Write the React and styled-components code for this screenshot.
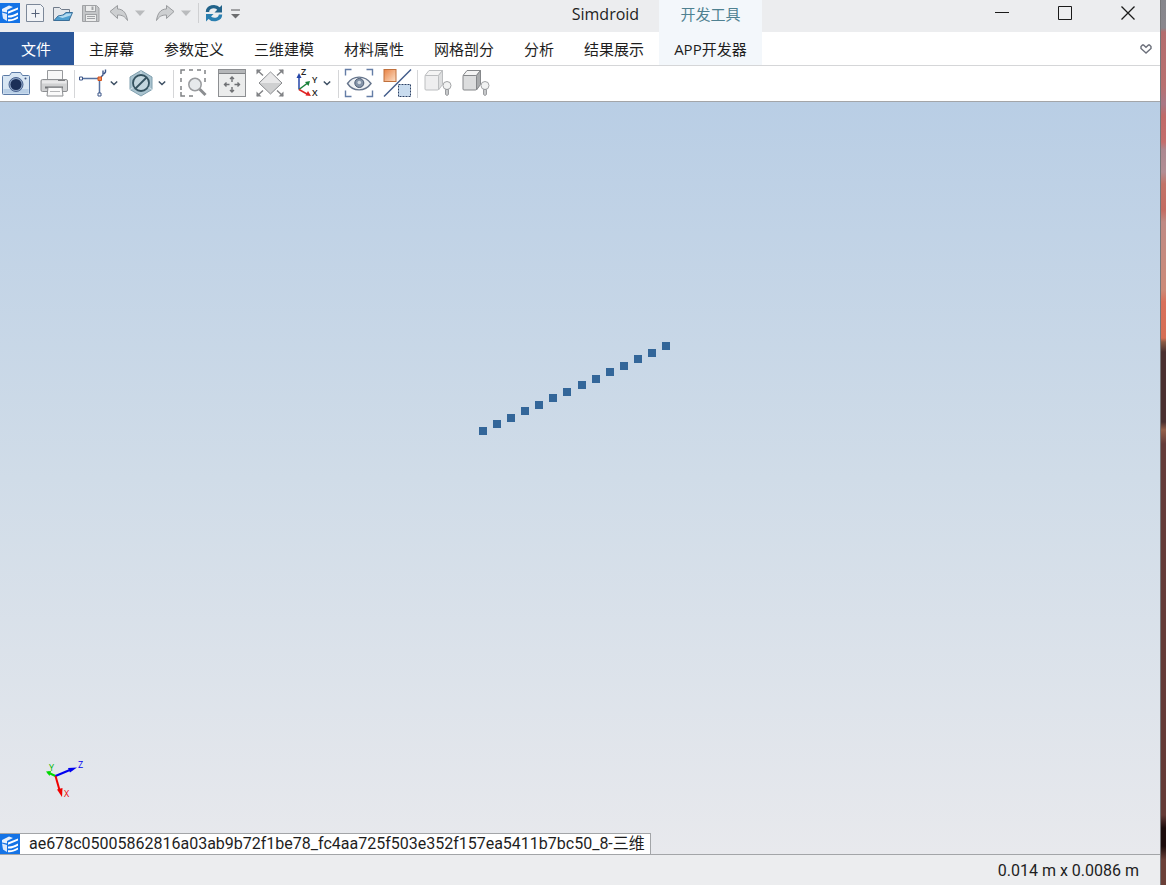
import React from "react";
import styled, { createGlobalStyle } from "styled-components";

const GlobalStyle = createGlobalStyle`
  * {
    box-sizing: border-box;
  }

  body {
    margin: 0;
    background: linear-gradient(
      #86868c 0,
      #8a878d 28px,
      #b36d6e 32px,
      #b87070 86px,
      #a87886 104px,
      #c06a68 116px,
      #c46e6c 142px,
      #ac8890 150px,
      #b28e94 172px,
      #c27468 184px,
      #c46c62 210px,
      #bf8a84 222px,
      #cc8a78 290px,
      #d8705a 302px,
      #d66e54 338px,
      #8a5a44 342px,
      #4a3030 352px,
      #4a3030 422px,
      #94604a 430px,
      #643c3a 444px,
      #643a36 815px,
      #1c0c0c 828px,
      #1c0c0c 846px,
      #6b4038 860px
    );
  }

  body,
  button {
    font-family: "Open Sans", "Noto Sans CJK SC", sans-serif;
    font-size: 15px;
    color: #1e1e1e;
  }

  button {
    display: flex;
    align-items: center;
    margin: 0;
    padding: 0;
    border: 0;
    background: none;
    cursor: pointer;
  }

  svg {
    display: block;
    flex: none;
    overflow: visible;
  }
`;

const Window = styled.div`
  display: flex;
  flex-direction: column;
  min-height: 100vh;
  margin-right: 5px;
  border-right: 1px solid #77777a;
  background: #ecedef;
`;

const Header = styled.header`
  display: grid;
  grid-template-columns: auto auto 1fr;
  grid-template-rows: 32px 33px;
  background: linear-gradient(#ecedef 32px, #fff 32px);
`;

const TitleArea = styled.div`
  display: flex;
  align-items: flex-start;
  padding: 3px 20px 0 0;
`;

const Title = styled.h1`
  margin: 0 0 0 auto;
  font-size: 16px;
  line-height: 22px;
  font-weight: 400;
`;

const QuickTools = styled.div`
  display: flex;
  gap: ${(props) => props.$gap || 8}px;
`;

const QuickExtra = styled(QuickTools)`
  margin-left: 5px;
  padding-left: 5px;
  border-left: 1px solid #cfd0d2;
`;

const AppLogo = styled.span`
  margin-right: 5px;
`;

const QuickSplit = styled.div`
  display: flex;
  gap: 6px;
  padding-right: 2px;
`;

const Tabs = styled.nav`
  grid-row: 2;
  display: flex;
`;

const Tab = styled.button`
  padding: 0 15px;
  white-space: nowrap;
  line-height: 32px;
`;

const FileTab = styled(Tab)`
  padding: 0 23px 0 21px;
  background: #2b579a;
  color: #fff;
`;

const ContextTitle = styled.div`
  background: #f3f7fb;
  color: #4f8191;
  text-align: center;
  line-height: 28px;
`;

const ContextTab = styled(Tab)`
  grid-row: 2;
  grid-column: 2;
  background: #f3f7fb;
`;

const WindowControls = styled.div`
  display: flex;
  justify-content: flex-end;
  padding-right: 1px;
`;

const ControlButton = styled.button`
  justify-content: center;
  width: 63px;
  height: 26px;
`;

const CollapseButton = styled.button`
  grid-row: 2;
  grid-column: 3;
  justify-self: end;
  padding-right: 8px;
`;

const Toolbar = styled.div`
  display: flex;
  padding: 4px 0 3px;
  background: #fff;
  border-top: 1px solid #d5d6d8;
  border-bottom: 1px solid #a3a5a8;
`;

const ToolGroup = styled.div`
  display: flex;
  gap: 10px;
  padding: 0 6px;

  &:first-child {
    padding-left: 2px;
  }

  & + & {
    border-left: 1px solid #d5d6d8;
  }
`;

const Split = styled.div`
  display: flex;
`;

const CaretButton = styled.button`
  width: 10px;
  justify-content: center;
`;

const Viewport = styled.main`
  position: relative;
  display: flex;
  flex: 1;
  flex-direction: column;
  justify-content: flex-end;
  align-items: flex-start;
  background: linear-gradient(#b9cee5, #d0dce8 50%, #e8e9ed);
`;

const PointCloud = styled.svg`
  position: absolute;
  left: 479px;
  top: 240px;
`;

const Triad = styled.svg`
  position: absolute;
  left: 40px;
  bottom: 52px;
`;

const DocTab = styled.button`
  gap: 9px;
  padding-right: 5px;
  background: #fff;
  border-top: 1px solid #a3a5a8;
  border-right: 1px solid #a3a5a8;
  font-family: Roboto, "Noto Sans CJK SC", sans-serif;
  font-size: 16px;
  line-height: 20px;
`;

const StatusBar = styled.footer`
  padding: 0 21px 0 0;
  border-top: 1px solid #a3a5a8;
  text-align: right;
  font-family: Roboto, "Noto Sans CJK SC", sans-serif;
  font-size: 16px;
  line-height: 32px;
  height: 31px;
`;

const Logo = () => (
  <svg width="20" height="20" viewBox="0 0 20 20">
    <rect width="20" height="20" fill="#1473e6" />
    <path d="M2 6 9 2.500l4 1.500-6 3v2.500L2 8.500z" fill="#fff" opacity=".9" />
    <path d="M2 9.500l5 1.500v7L3 15.500z" fill="#dbe9fc" />
    <path d="M8 8.500 18 4.500v2L8 10.700z" fill="#fff" />
    <path d="M8 12.500c3 .3 6-1 10-3v2.200c-4 2-7 3.300-10 2.800z" fill="#fff" />
    <path d="M8 16.200c3 .4 6-.6 10-2.800v2.200c-4 2.200-7 3-10 2.600z" fill="#fff" />
  </svg>
);

const NewIcon = () => (
  <svg width="20" height="20" viewBox="0 0 20 20" fill="none">
    <path d="M1.500 1.500h14l3 3v14h-17z" fill="#f1f3f6" stroke="#7c8899" />
    <path d="M10.500 6.500v8M6.500 10.500h8" stroke="#56637a" />
  </svg>
);

const OpenIcon = () => (
  <svg width="20" height="20" viewBox="0 0 20 20" strokeLinejoin="round">
    <path d="M.5 17.500V4.500h6l2 2h8v11z" fill="#e4e7eb" stroke="#707b8a" />
    <path d="M1 17.500 5 13l5-1 3-2.500h6.500L16 17.500z" fill="#4f9fd0" stroke="#3a6f9a" />
    <path d="M5 13.500l5.500-1 3-2h5l-1 2-8 2.500z" fill="#b3daf0" />
  </svg>
);

const SaveIcon = () => (
  <svg width="20" height="20" viewBox="0 0 20 20" stroke="#a0a2a5">
    <path d="M1.500 2.500h14l2.500 2.500v13.500H1.500z" fill="#c4c6c8" />
    <rect x="4.500" y="2.500" width="10" height="6" fill="#eceded" />
    <path d="M11.500 3.500v3.500" strokeWidth="2" />
    <rect x="4.500" y="11.500" width="11" height="7" fill="#eceded" />
    <path d="M6 13.500h8M6 15.500h8" />
  </svg>
);

const UndoIcon = ({ flip }) => (
  <svg width="20" height="20" viewBox="0 0 20 20">
    <path
      d="M1 8.500 8.500 2.500v3.500c6 0 9 4.500 10 11.500-2.500-4-5-5.500-10-5.500v3.500z"
      fill="#cdcfd1"
      stroke="#999b9e"
      strokeLinejoin="round"
      transform={flip ? "matrix(-1 0 0 1 20 0)" : undefined}
    />
  </svg>
);

const TriangleIcon = () => (
  <svg width="10" height="20" viewBox="0 0 10 20">
    <path d="M0 7.500h10L5 13z" fill="#b9bbbd" />
  </svg>
);

const RefreshIcon = () => (
  <svg width="20" height="20" viewBox="0 0 20 20" fill="none">
    <path d="M3.500 9C3.500 4 11 1.500 15 6" stroke="#22638a" strokeWidth="3.400" />
    <path d="M18 2v7.500h-7.500z" fill="#22638a" />
    <path d="M16.500 11.500c0 5-7.500 7-11.500 2.500" stroke="#2a7fb0" strokeWidth="3.400" />
    <path d="M2 18.500V11h7.500z" fill="#2a7fb0" />
  </svg>
);

const CustomizeIcon = () => (
  <svg width="10" height="20" viewBox="0 0 10 20">
    <path d="M1 7h9" stroke="#88898b" strokeWidth="1.500" />
    <path d="M1 11h9l-4.500 4.500z" fill="#6c6d6f" />
  </svg>
);

const CaretIcon = () => (
  <svg width="8" height="28" viewBox="0 0 8 28">
    <path d="M.8 11.500 4 14.500l3.200-3" fill="none" stroke="#3d4f63" strokeWidth="1.500" />
  </svg>
);

const Icon = ({ children }) => (
  <svg width="28" height="28" viewBox="0 0 28 28" fill="none">
    {children}
  </svg>
);

const CameraIcon = () => (
  <Icon>
    <path
      d="M1.500 5.500h6l2-3h9l2 3h6q1 0 1 1v17q0 1-1 1h-25q-1 0-1-1v-17q0-1 1-1z"
      fill="#d8e6f3"
      stroke="#5c7ba6"
    />
    <path d="M1.500 19h25v4.500h-25z" fill="#b9cfe6" />
    <circle cx="14" cy="14.500" r="7" fill="#8fa6c6" stroke="#4a6390" />
    <circle cx="14" cy="14.500" r="5.500" fill="#1b2f57" />
    <circle cx="23.500" cy="8.500" r="1" fill="#3d5580" />
  </Icon>
);

const PrinterIcon = () => (
  <Icon>
    <path d="M7.500.5h15v10h-15z" fill="#f7f7f7" stroke="#97999c" />
    <rect x="1" y="9.500" width="26.500" height="12" rx="1.500" fill="#d0d1d2" stroke="#8d8f92" />
    <path d="M2 10.500h24.500v3H2z" fill="#e9e9ea" />
    <path d="M18 10.500h7" stroke="#7d7f82" />
    <path d="M5 17.500h18" stroke="#6f7174" strokeWidth="2" />
    <path d="M8 17.500h14l1 8.500H7z" fill="#fafafa" stroke="#8d8f92" />
    <path d="M10 21.500h10" stroke="#b5b6b8" />
  </Icon>
);

const PathIcon = () => (
  <Icon>
    <path d="M1 8.500h17.500V23" stroke="#56719f" strokeWidth="1.500" />
    <path d="M-1.500 7h3v3h-3zM17 23h3v3h-3z" fill="#fff" stroke="#3d5688" />
    <path d="M20 7l2-2V.5M23 4l1.500-2v-2.500" stroke="#3d5688" strokeWidth="1.400" />
    <path d="M17 7h3.500v3.500H17z" fill="#ef8c54" stroke="#d3521c" />
  </Icon>
);

const ClipIcon = () => (
  <Icon>
    <path d="M12 .5 23 7v12.500L12 26 1 19.500V7z" fill="#a9c3cf" stroke="#7f9fae" />
    <path d="M12 .5v5M1 19.500l4-2.500M23 19.500 19 17" stroke="#d6e4ea" />
    <circle cx="12" cy="13" r="8" fill="#c3d6de" stroke="#34525f" strokeWidth="1.800" />
    <path d="M6.500 18.500l11-11" stroke="#34525f" strokeWidth="1.800" />
  </Icon>
);

const ZoomBoxIcon = () => (
  <Icon>
    <path
      d="M1 4V0h4M9 0h4M17 0h4M25 0v4M25 8v4M1 8v4M1 16v4M1 22v4h4M9 26h4"
      stroke="#808285"
      strokeWidth="1.500"
    />
    <path d="M19.500 19l6 6" stroke="#8b8d90" strokeWidth="3" />
    <circle cx="15" cy="14.500" r="6.200" fill="#e6e9ec" stroke="#999b9e" strokeWidth="1.500" />
  </Icon>
);

const FitIcon = () => (
  <Icon>
    <rect x=".5" y="-.5" width="27" height="27" fill="#ebecec" stroke="#8d8f92" />
    <path d="M1 1.500h26" stroke="#b5b7b9" strokeWidth="3" />
    <path d="M1 3.500h26" stroke="#808285" />
    <path
      d="M14 7v5M14 17v5M6.500 14.500h5M16.500 14.500h5M12 9l2-2 2 2M12 20l2 2 2-2M8.500 12.500l-2 2 2 2M19.500 12.500l2 2-2 2"
      stroke="#6f7174"
      strokeWidth="1.400"
    />
  </Icon>
);

const ResetIcon = () => (
  <Icon>
    <path d="M14.500 2 26 13 14.500 24 3 13z" fill="#cfd0d1" stroke="#8a8c8f" />
    <path d="M14.500 2.500 25 13H4z" fill="#e8e8e9" />
    <path
      d="M1 0l6 5.500M27 0l-6 5.500M1 26l6-5.500M27 26l-6-5.500"
      stroke="#808285"
      strokeWidth="1.400"
    />
    <path d="M.5-.5h5l-5 5zM27.500-.5v5l-5-5zM.5 26.500v-5l5 5zM27.500 26.500h-5l5-5z" fill="#808285" />
  </Icon>
);

const AxisLabel = styled.text`
  font-family: "Open Sans", sans-serif;
  font-size: ${(props) => props.$size || 9}px;
  font-weight: ${(props) => (props.$bold ? 600 : 400)};
`;

const AxesIcon = () => (
  <Icon>
    <path d="M5 19.500V6" stroke="#2446a8" strokeWidth="1.500" />
    <path d="M5 3l2.500 5h-5z" fill="#2446a8" />
    <path d="M5 19.500l8-6" stroke="#188038" strokeWidth="1.500" />
    <path d="M16 11l-1.500 5-3.500-4z" fill="#188038" />
    <path d="M5 19.500l8 4.500" stroke="#e02424" strokeWidth="1.500" />
    <path d="M17 26l-5.500-.5 2.500-4.500z" fill="#e02424" />
    <AxisLabel x="7" y="5" $bold fill="#222">Z</AxisLabel>
    <AxisLabel x="18" y="13" $bold fill="#222">Y</AxisLabel>
    <AxisLabel x="18" y="26" $bold fill="#222">X</AxisLabel>
  </Icon>
);

const EyeIcon = () => (
  <Icon>
    <path
      d="M.5 5.500V-.5h6M21.500-.5h6v6M27.500 20.500v6h-6M6.500 26.500h-6v-6"
      stroke="#647da6"
      strokeWidth="1.400"
    />
    <path
      d="M2.500 13.500C8 5 20 5 26 13.500 20 22 8 22 2.500 13.500z"
      fill="#eef1f4"
      stroke="#66758c"
      strokeWidth="1.400"
    />
    <circle cx="14.300" cy="13" r="4.500" fill="#8494a8" stroke="#4d5d75" />
    <circle cx="14.300" cy="12.500" r="1.800" fill="#d3dae2" />
  </Icon>
);

const OpacityIcon = () => (
  <Icon>
    <defs>
      <linearGradient id="orange" x2="1" y2="1">
        <stop stopColor="#e98243" />
        <stop offset="1" stopColor="#fbe0c8" />
      </linearGradient>
    </defs>
    <rect x="1" y="-.5" width="12" height="12" fill="url(#orange)" stroke="#c0703c" />
    <path d="M28-.5 1 26.500" stroke="#3f5a88" strokeWidth="1.400" />
    <rect
      x="15.500"
      y="14.500"
      width="12"
      height="12"
      fill="#c9dcef"
      stroke="#2d4266"
      strokeDasharray="2 1"
    />
  </Icon>
);

const BoxIcon = ({ edge, front, side }) => (
  <Icon>
    <g stroke={edge} strokeLinejoin="round">
      <path d="M1 5.500 5 .5h13.500l-4 5z" fill="#f4f4f4" />
      <path d="M14.500 5.500l4-5v14l-4 5.500z" fill={side} />
      <rect x="1" y="5.500" width="13.500" height="14.500" rx="1" fill={front} />
    </g>
    <circle cx="23" cy="15.500" r="4" fill="#f1f2f2" stroke="#a2a4a6" />
    <path d="M21.500 19.500h3v5l-1.500 1-1.500-1z" fill="#c6c8ca" stroke="#999b9e" />
  </Icon>
);

const ToolButton = ({ label, children }) => (
  <button type="button" aria-label={label}>
    {children}
  </button>
);

const SplitTool = ({ label, children }) => (
  <Split>
    <ToolButton label={label}>{children}</ToolButton>
    <CaretButton type="button" aria-label={label + "选项"}>
      <CaretIcon />
    </CaretButton>
  </Split>
);

const TABS = ["主屏幕", "参数定义", "三维建模", "材料属性", "网格剖分", "分析", "结果展示"];

const POINTS = [
  [0, 85], [14, 78], [28, 72], [42, 65], [56, 59], [70, 52], [84, 46],
  [99, 39], [113, 33], [127, 26], [141, 20], [155, 13], [169, 7], [183, 0],
];

export default function App() {
  return (
    <>
      <GlobalStyle />
      <Window>
        <Header>
          <TitleArea>
            <AppLogo>
              <Logo />
            </AppLogo>
            <QuickTools>
              <ToolButton label="新建"><NewIcon /></ToolButton>
              <ToolButton label="打开"><OpenIcon /></ToolButton>
              <ToolButton label="保存"><SaveIcon /></ToolButton>
              <QuickSplit>
                <ToolButton label="撤销"><UndoIcon /></ToolButton>
                <ToolButton label="撤销列表"><TriangleIcon /></ToolButton>
              </QuickSplit>
              <QuickSplit>
                <ToolButton label="重做"><UndoIcon flip /></ToolButton>
                <ToolButton label="重做列表"><TriangleIcon /></ToolButton>
              </QuickSplit>
            </QuickTools>
            <QuickExtra $gap={6}>
              <ToolButton label="刷新"><RefreshIcon /></ToolButton>
              <ToolButton label="自定义"><CustomizeIcon /></ToolButton>
            </QuickExtra>
            <Title>Simdroid</Title>
          </TitleArea>
          <ContextTitle>开发工具</ContextTitle>
          <WindowControls>
            <ControlButton type="button" aria-label="最小化">
              <svg width="14" height="14" viewBox="0 0 14 14">
                <path d="M0 6.500h14" stroke="#1a1a1a" />
              </svg>
            </ControlButton>
            <ControlButton type="button" aria-label="最大化">
              <svg width="14" height="14" viewBox="0 0 14 14">
                <path d="M.5.5h13v13H.5z" fill="none" stroke="#1a1a1a" />
              </svg>
            </ControlButton>
            <ControlButton type="button" aria-label="关闭">
              <svg width="14" height="14" viewBox="0 0 14 14">
                <path d="M.5.5l13 13M13.500.5l-13 13" stroke="#1a1a1a" strokeWidth="1.300" />
              </svg>
            </ControlButton>
          </WindowControls>

          <Tabs>
            <FileTab type="button">文件</FileTab>
            {TABS.map((tab) => (
              <Tab type="button" key={tab}>{tab}</Tab>
            ))}
          </Tabs>
          <ContextTab type="button">APP开发器</ContextTab>
          <CollapseButton type="button" aria-label="折叠功能区">
            <svg width="12" height="10" viewBox="0 0 12 10">
              <path
                d="M6 9 1 4.500V2.500L2.500 1h1L6 3.200 8.500 1h1L11 2.500v2z"
                fill="#fff"
                stroke="#6b6f7a"
                strokeWidth="1.400"
              />
            </svg>
          </CollapseButton>
        </Header>

        <Toolbar>
          <ToolGroup>
            <ToolButton label="截图"><CameraIcon /></ToolButton>
            <ToolButton label="打印"><PrinterIcon /></ToolButton>
          </ToolGroup>
          <ToolGroup>
            <SplitTool label="选择"><PathIcon /></SplitTool>
            <SplitTool label="过滤"><ClipIcon /></SplitTool>
          </ToolGroup>
          <ToolGroup>
            <ToolButton label="框选缩放"><ZoomBoxIcon /></ToolButton>
            <ToolButton label="适应窗口"><FitIcon /></ToolButton>
            <ToolButton label="重置视图"><ResetIcon /></ToolButton>
            <SplitTool label="视角"><AxesIcon /></SplitTool>
          </ToolGroup>
          <ToolGroup>
            <ToolButton label="显示"><EyeIcon /></ToolButton>
            <ToolButton label="透明度"><OpacityIcon /></ToolButton>
          </ToolGroup>
          <ToolGroup>
            <ToolButton label="隐藏实体">
              <BoxIcon edge="#bcbec0" front="#eeeeef" side="#dddedf" />
            </ToolButton>
            <ToolButton label="显示实体">
              <BoxIcon edge="#85878a" front="#dcddde" side="#a9abad" />
            </ToolButton>
          </ToolGroup>
        </Toolbar>

        <Viewport>
          <PointCloud width="191" height="93" viewBox="0 0 191 93">
            {POINTS.map(([x, y]) => (
              <rect key={x} x={x} y={y} width="8" height="8" fill="#336699" />
            ))}
          </PointCloud>
          <Triad width="48" height="44" viewBox="0 0 48 44">
            <path d="M15.500 18 8 14.500" stroke="#00d800" strokeWidth="2" />
            <path d="M6 13.500l5-.5-1.500 5z" fill="#00d800" />
            <path d="M15.500 18 31 11.500" stroke="#0000f0" strokeWidth="2" />
            <path d="M37 9.500 28 10l2 4.500z" fill="#0000f0" />
            <path d="M15.500 18l4 14" stroke="#f00000" strokeWidth="2" />
            <path d="M22 39l-5-7.500 5.500-1.500z" fill="#f00000" />
            <AxisLabel x="38" y="10" fill="#0000f0">Z</AxisLabel>
            <AxisLabel x="9" y="13" fill="#00b800">Y</AxisLabel>
            <AxisLabel x="24" y="39" fill="#f00000">X</AxisLabel>
          </Triad>
          <DocTab type="button">
            <Logo />
            ae678c05005862816a03ab9b72f1be78_fc4aa725f503e352f157ea5411b7bc50_8-三维
          </DocTab>
        </Viewport>

        <StatusBar>0.014 m x 0.0086 m</StatusBar>
      </Window>
    </>
  );
}
